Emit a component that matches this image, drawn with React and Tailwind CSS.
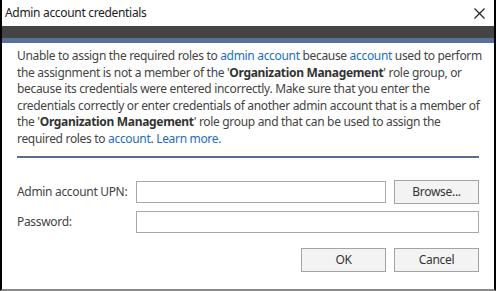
import React from 'react';

const Link = ({ children }) => <span className="text-[#1c6dbf]">{children}</span>;
const Bold = ({ children }) => <span className="font-bold text-[#333]">{children}</span>;

const Button = ({ children }) => (
  <button className="w-[85px] h-[24px] border border-[#a3a3a3] bg-[#f3f3f3] text-[12px] text-[#333] tracking-[-0.3px]">
    {children}
  </button>
);

export default function App() {
  return (
    <div
      className="w-[496px] h-[291px] bg-white border-x-2 border-black border-b-2 border-b-[#8a8a8a] flex flex-col overflow-hidden"
      style={{ fontFamily: '"Noto Sans", "Open Sans", sans-serif' }}
    >
      {/* title bar */}
      <div className="h-[26px] flex items-center justify-between pl-[3px] pr-[9px]">
        <span className="text-[12px] text-[#222] tracking-[-0.32px]">Admin account credentials</span>
        <svg width="11" height="11" viewBox="0 0 11 11" className="text-[#222]">
          <path d="M0.5 0.5 L10.5 10.5 M10.5 0.5 L0.5 10.5" stroke="currentColor" strokeWidth="1.2" />
        </svg>
      </div>
      <div className="h-[12px] bg-[#444444]" />
      <div className="h-[5px] bg-[#5a7197]" />

      <div className="px-[15px] pt-[5px] text-[12px] leading-[16.6px] text-[#444] whitespace-nowrap tracking-[-0.32px]">
        <div>
          Unable to assign the required roles to <Link>admin account</Link> because <Link>account</Link> used to perform
        </div>
        <div>
          the assignment is not a member of the '<Bold>Organization Management</Bold>' role group, or
        </div>
        <div>because its credentials were entered incorrectly. Make sure that you enter the</div>
        <div>credentials correctly or enter credentials of another admin account that is a member of</div>
        <div>
          the '<Bold>Organization Management</Bold>' role group and that can be used to assign the
        </div>
        <div>
          required roles to <Link>account</Link>. <Link>Learn more.</Link>
        </div>
        <div className="mt-[8px] h-[2px] bg-[#5a6e8f]" />
      </div>

      <div className="px-[15px] mt-[22px] flex flex-col gap-[7px] text-[12px] text-[#444] tracking-[-0.32px]">
        <div className="flex items-center">
          <span className="w-[119px]">Admin account UPN:</span>
          <div className="w-[250px] h-[22px] border border-[#a8a8a8]" />
          <div className="ml-[8px]">
            <Button>Browse...</Button>
          </div>
        </div>
        <div className="flex items-center">
          <span className="w-[119px]">Password:</span>
          <div className="w-[343px] h-[22px] border border-[#a8a8a8]" />
        </div>
      </div>

      <div className="px-[15px] mt-[15px] flex justify-end gap-[8px]">
        <Button>OK</Button>
        <Button>Cancel</Button>
      </div>
    </div>
  );
}
